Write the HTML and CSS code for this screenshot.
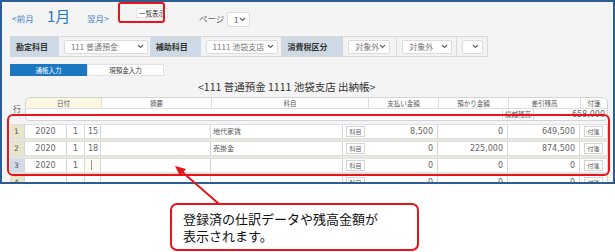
FILE: index.html
```html
<!DOCTYPE html>
<html lang="ja">
<head>
  <meta charset="UTF-8">
  <title>出納帳</title>
  <link rel="stylesheet" href="styles.css">
</head>
<body>

<div class="screen">
  <div class="nav">
    <a class="prev">&lt;前月</a>
    <span class="month">1月</span>
    <a class="next">翌月&gt;</a>
    <span class="list-btn">一覧表示</span>
    <span class="page-label">ページ</span>
    <span class="sel sel-page">1<svg class="chev" viewBox="0 0 7 5"><path d="M1 1l2.5 2.5L6 1"/></svg></span>
  </div>

  <div class="filter">
    <span class="lbl lbl1">勘定科目</span>
    <span class="cell c1"><span class="sel s1">111 普通預金<svg class="chev" viewBox="0 0 7 5"><path d="M1 1l2.5 2.5L6 1"/></svg></span></span>
    <span class="lbl lbl2">補助科目</span>
    <span class="cell c2"><span class="sel s2">1111 池袋支店<svg class="chev" viewBox="0 0 7 5"><path d="M1 1l2.5 2.5L6 1"/></svg></span></span>
    <span class="lbl lbl3">消費税区分</span>
    <span class="cell c3"><span class="sel s3">対象外<svg class="chev" viewBox="0 0 7 5"><path d="M1 1l2.5 2.5L6 1"/></svg></span></span>
    <span class="cell c4"><span class="sel s4">対象外<svg class="chev" viewBox="0 0 7 5"><path d="M1 1l2.5 2.5L6 1"/></svg></span></span>
    <span class="cell c5"><span class="sel s5"><svg class="chev" viewBox="0 0 7 5"><path d="M1 1l2.5 2.5L6 1"/></svg></span></span>
  </div>

  <div class="tabs">
    <span class="tab on">通帳入力</span>
    <span class="tab">現預金入力</span>
  </div>

  <div class="title">&lt;111 普通預金 1111 池袋支店 出納帳&gt;</div>

  <div class="ledger-head">
    <div class="gyo">行</div>
    <div class="head">
      <div class="head-row">
        <span class="h-date">日付</span>
        <span class="h-memo">摘要</span>
        <span class="h-acc">科目</span>
        <span class="h-amt">支払い金額</span>
        <span class="h-amt">預かり金額</span>
        <span class="h-bal">差引残高</span>
        <span class="h-tag">付箋</span>
      </div>
      <div class="carry">
        <span class="carry-lbl">繰越残高</span>
        <span class="carry-val">658,000</span>
      </div>
    </div>
  </div>

  <div class="rows">
    <div class="row">
      <span class="no">1</span><span class="num c">2020</span><span class="num c">1</span><span class="num">15</span>
      <span></span><span class="acc">地代家賃</span><span class="btn-cell"><span class="mini">科目</span></span>
      <span class="num r">8,500</span><span class="num r">0</span><span class="num r">649,500</span>
      <span class="btn-cell"><span class="mini">付箋</span></span>
    </div>
    <div class="row">
      <span class="no">2</span><span class="num c">2020</span><span class="num c">1</span><span class="num">18</span>
      <span></span><span class="acc">売掛金</span><span class="btn-cell"><span class="mini">科目</span></span>
      <span class="num r">0</span><span class="num r">225,000</span><span class="num r">874,500</span>
      <span class="btn-cell"><span class="mini">付箋</span></span>
    </div>
    <div class="row cur">
      <span class="no">3</span><span class="num c">2020</span><span class="num c">1</span><span class="num edit"><i class="caret"></i></span>
      <span></span><span class="acc"></span><span class="btn-cell"><span class="mini">科目</span></span>
      <span class="num r">0</span><span class="num r">0</span><span class="num r">0</span>
      <span class="btn-cell"><span class="mini">付箋</span></span>
    </div>
    <div class="row">
      <span class="no">4</span><span class="num c"></span><span class="num c"></span><span class="num"></span>
      <span></span><span class="acc"></span><span class="btn-cell"><span class="mini">科目</span></span>
      <span class="num r">0</span><span class="num r">0</span><span class="num r">0</span>
      <span class="btn-cell"><span class="mini">付箋</span></span>
    </div>
  </div>

  <div class="mark mark-btn"></div>
  <div class="mark mark-rows"></div>
</div>

<div class="callout">登録済の仕訳データや残高金額が<br>表示されます。</div>

<svg class="arrow" viewBox="170 160 55 45">
  <line x1="219" y1="204" x2="180" y2="170"/>
  <polygon points="175,166 186,169 180,176"/>
</svg>

</body>
</html>
```

FILE: styles.css
```css
* {
  box-sizing: border-box;
}
body {
  margin: 0;
  width: 615px;
  height: 252px;
  position: relative;
  overflow: hidden;
  background: #fff;
  font-family: "Noto Sans CJK JP", sans-serif;
  color: #333;
}
.screen {
  position: relative;
  height: 184px;
  border: 2px solid #2d5e93;
  background: #f4f4f4;
  overflow: hidden;
}

/* top navigation */
.nav {
  display: flex;
  align-items: center;
  height: 32px;
  padding-left: 10px;
}
.prev, .next {
  color: #3f86c8;
  font-size: 8.5px;
}
.prev {
  width: 35px;
}
.month {
  width: 40px;
  font-size: 15px;
  color: #1c79c4;
  margin-top: -5px;
}
.next {
  width: 49px;
}
.list-btn {
  width: 32px;
  height: 10px;
  margin-top: -10px;
  background: #fff;
  border: 1px solid #e4e4e4;
  font-size: 6.5px;
  line-height: 8px;
  text-align: center;
  color: #333;
  white-space: nowrap;
}
.page-label {
  margin-left: 31px;
  width: 28px;
  font-size: 8.5px;
  color: #666;
}
.sel {
  display: inline-flex;
  align-items: center;
  justify-content: space-between;
  height: 14px;
  padding: 0 3px 0 6px;
  background: #fff;
  border: 1px solid #dcdcdc;
  border-radius: 2px;
  font-size: 8px;
  color: #777;
  white-space: nowrap;
}
.chev {
  width: 7px;
  height: 5px;
  fill: none;
  stroke: #666;
  stroke-width: 1.2;
}
.sel-page {
  width: 23px;
  height: 15px;
  margin-top: 3px;
  color: #555;
}

/* filter bar */
.filter {
  display: flex;
  margin: 2px 0 0 8px;
  width: 478px;
  height: 21px;
  background: #ececec;
  border: 1px solid #d8d8d8;
}
.lbl {
  display: flex;
  align-items: center;
  padding-left: 5px;
  background: #cddae6;
  font-size: 8px;
  font-weight: bold;
  color: #333;
}
.lbl1 { width: 48px; }
.lbl2 { width: 50px; }
.lbl3 { width: 61px; }
.cell {
  display: flex;
  align-items: center;
  padding-left: 5px;
  background: #f3f3f3;
  border-right: 1px solid #dadada;
}
.c1 { width: 92px; }
.c2 { width: 82px; }
.c3 { width: 54px; }
.c4 { width: 60px; }
.c5 { width: 30px; border-right: none; }
.s1 { width: 84px; }
.s2 { width: 72px; }
.s3 { width: 42px; }
.s4 { width: 50px; }
.s5 { width: 21px; justify-content: flex-end; }

/* tabs */
.tabs {
  display: flex;
  margin: 7px 0 0 8px;
}
.tab {
  width: 77px;
  height: 12px;
  background: #fff;
  border: 1px solid #e2e2e2;
  font-size: 6.5px;
  line-height: 10px;
  text-align: center;
  color: #333;
}
.tab.on {
  background: #1b77c1;
  border-color: #1b77c1;
  color: #fff;
}

.title {
  height: 20px;
  margin-top: 1px;
  padding-left: 196px;
  font-size: 10.5px;
  line-height: 20px;
  color: #333;
}

/* ledger */
.ledger-head {
  display: flex;
  padding-left: 8px;
}
.gyo {
  width: 15px;
  display: flex;
  align-items: center;
  padding: 0 0 2px 3px;
  font-size: 8px;
  color: #555;
}
.head {
  width: 583px;
  background: #fff;
  border: 1px solid #d4d4d4;
  border-radius: 6px 6px 4px 4px;
  overflow: hidden;
}
.head-row {
  display: grid;
  grid-template-columns: 76px 110px 157px 70px 70px 72px 1fr;
  height: 11px;
  border-bottom: 1px solid #ddd;
}
.head-row span {
  border-right: 1px solid #ddd;
  font-size: 6.5px;
  line-height: 10px;
  text-align: center;
  color: #555;
}
.head-row span:last-child {
  border-right: none;
}
.h-date {
  background: #fcf8e4;
}
.carry {
  display: flex;
  justify-content: flex-end;
  height: 11px;
}
.carry-lbl {
  width: 32px;
  border-left: 1px solid #ddd;
  border-right: 1px solid #ddd;
  font-size: 6.5px;
  line-height: 11px;
  text-align: center;
  color: #555;
}
.carry-val {
  width: 73px;
  padding-right: 2px;
  text-align: right;
  font-family: "DejaVu Sans", sans-serif;
  font-size: 8px;
  line-height: 11px;
  color: #666;
}

.rows {
  margin: 3px 0 0 8px;
  width: 598px;
  background: #e9e7da;
}
.row {
  display: grid;
  grid-template-columns: 15px 42px 18px 16px 110px 132px 25px 70px 70px 72px 28px;
  height: 15px;
  margin-bottom: 2px;
  background: #fff;
}
.row > span {
  border-right: 1px solid #d6d6d6;
  border-top: 1px solid #e0e0e0;
  border-bottom: 1px solid #e0e0e0;
}
.row .no {
  background: #e8e5c8;
  padding-left: 4px;
  font-family: "DejaVu Sans", sans-serif;
  font-size: 7.5px;
  line-height: 13px;
  color: #555;
}
.row.cur .no {
  background: #d2dce8;
}
.num {
  padding: 0 3px;
  font-family: "DejaVu Sans", sans-serif;
  font-size: 8px;
  line-height: 13px;
  color: #666;
}
.num.c {
  text-align: center;
}
.num.r {
  text-align: right;
  padding-right: 4px;
}
.num.edit {
  background: #fdfbf0;
}
.caret {
  display: block;
  width: 1px;
  height: 10px;
  margin: 1px 0 0 3px;
  background: #999;
}
.acc {
  padding-left: 2px;
  font-size: 7px;
  line-height: 13px;
  color: #555;
}
.btn-cell {
  display: flex;
  align-items: center;
  justify-content: center;
}
.row > .btn-cell:nth-child(7) {
  border-right: none;
  border-left: none;
}
.mini {
  padding: 0 2px;
  height: 11px;
  background: #fff;
  border: 1px solid #d4d4d4;
  font-size: 6px;
  line-height: 9px;
  color: #555;
}

/* annotations */
.mark {
  position: absolute;
  border: 2px solid #e8141c;
  border-radius: 6px;
}
.mark-btn {
  left: 116px;
  top: 0;
  width: 47px;
  height: 21px;
  border-radius: 3px;
}
.mark-rows {
  left: 5px;
  top: 112px;
  width: 603px;
  height: 62px;
}
.callout {
  margin: 19px 0 0 170px;
  width: 249px;
  height: 48px;
  padding: 5px 0 0 11px;
  background: #fff;
  border: 2px solid #e8141c;
  border-radius: 7px;
  font-size: 13px;
  line-height: 17px;
  color: #111;
}
.arrow {
  position: absolute;
  left: 170px;
  top: 160px;
  width: 55px;
  height: 45px;
}
.arrow line {
  stroke: #e8141c;
  stroke-width: 2;
}
.arrow polygon {
  fill: #e8141c;
}
```
